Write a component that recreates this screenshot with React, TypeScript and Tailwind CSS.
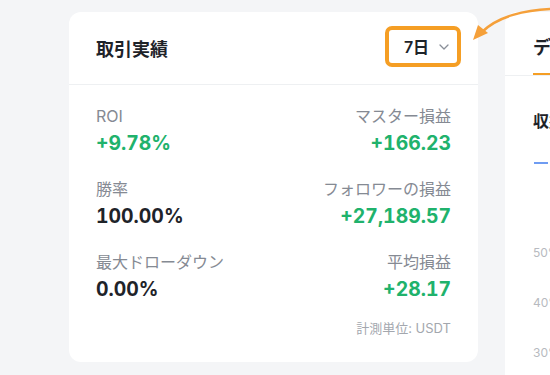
import React from "react";

const font = { fontFamily: 'Inter, "Noto Sans CJK JP", sans-serif' };

function Stat({ label, value, green, right }: { label: string; value: string; green?: boolean; right?: boolean }) {
  return (
    <div className={`flex flex-col ${right ? "items-end" : "items-start"}`}>
      <div className="text-[16px] leading-[22px] text-[#858a93]">{label}</div>
      <div className={`mt-[3px] text-[19.4px] leading-[26px] font-bold tabular-nums ${green ? "text-[#20b26c]" : "text-[#1e2329]"}`}>{value}</div>
    </div>
  );
}

export default function App() {
  return (
    <div className="relative w-[550px] h-[375px] overflow-hidden bg-[#f4f5f7]" style={font}>
      <div className="flex pl-[69px] pt-[12px] gap-[27px]">
        <div className="w-[409px] h-[350px] shrink-0 rounded-[12px] bg-white flex flex-col">
          <div className="h-[73px] flex items-center justify-between pl-[27px] pr-[17px] border-b border-[#eef0f2]">
            <div className="text-[18px] font-bold text-[#1e2329] mt-[2px]">取引実績</div>
            <div className="w-[76px] h-[41px] rounded-[7px] border-[4px] border-[#f59e24] flex items-center justify-center gap-[10px] mt-[-3px] pl-[7px]">
              <span className="text-[16px] font-semibold text-[#1e2329]">7日</span>
              <svg width="10" height="6" viewBox="0 0 10 6" fill="none">
                <path d="M1 1l4 4 4-4" stroke="#8a8f98" strokeWidth="1.3" strokeLinecap="round" strokeLinejoin="round" />
              </svg>
            </div>
          </div>
          <div className="px-[27px] pt-[20px] flex justify-between">
            <div className="flex flex-col gap-[22px]">
              <Stat label="ROI" value="+9.78%" green />
              <Stat label="勝率" value="100.00%" />
              <Stat label="最大ドローダウン" value="0.00%" />
            </div>
            <div className="flex flex-col items-end">
              <div className="flex flex-col gap-[22px] items-end">
                <Stat label="マスター損益" value="+166.23" green right />
                <Stat label="フォロワーの損益" value="+27,189.57" green right />
                <Stat label="平均損益" value="+28.17" green right />
              </div>
              <div className="mt-[17px] text-[13px] leading-[18px] text-[#a3a7ae]">計測単位: USDT</div>
            </div>
          </div>
        </div>
        <div className="w-[200px] h-[400px] shrink-0 rounded-tl-[12px] bg-white flex flex-col">
          <div className="h-[64px] border-b border-[#eef0f2] pl-[28px] flex items-end">
            <div className="flex flex-col">
              <div className="text-[18px] font-bold text-[#1e2329] leading-[24px]">データ</div>
              <div className="mt-[13px] h-[2px] bg-[#f59e24]"></div>
            </div>
          </div>
          <div className="pl-[28px] pt-[34px] text-[16px] font-bold text-[#1e2329] leading-[22px]">収益率</div>
          <div className="ml-[29px] mt-[30px] w-[14px] h-[2px] bg-[#6f9cf2]"></div>
          <div className="pl-[28px] mt-[80px] flex flex-col gap-[33px] text-[12px] leading-[17px] text-[#b7bac0]">
            <div>50%</div>
            <div>40%</div>
            <div>30%</div>
          </div>
        </div>
      </div>
      <svg className="absolute left-[466px] top-0" width="84" height="48" viewBox="0 0 84 48" fill="none">
        <path d="M84 9 C 60 10, 32 16, 16 32" stroke="#f5a03a" strokeWidth="2.5" strokeLinecap="round" />
        <path d="M7 40 L 22 33 L 12 25 Z" fill="#f5a03a" />
      </svg>
    </div>
  );
}
